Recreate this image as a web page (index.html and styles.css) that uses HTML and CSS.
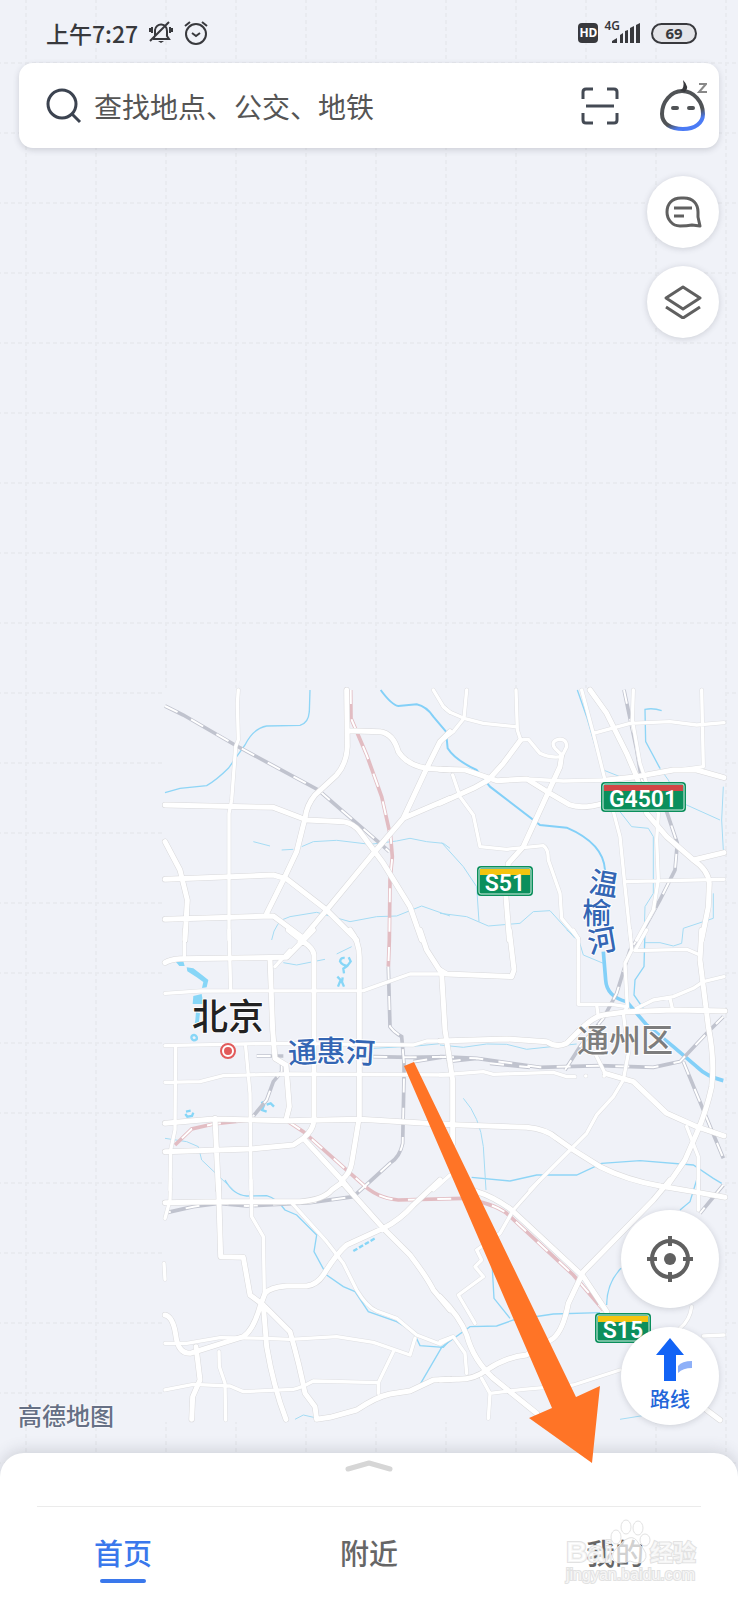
FILE: index.html
```
<!DOCTYPE html>
<html lang="zh-CN">

<head>
    <meta charset="utf-8">
    <meta name="viewport" content="width=device-width, initial-scale=1">
    <title>高德地图</title>
    <link rel="stylesheet" href="styles.css">
</head>

<body>
    <div class="screen">
        <svg class="map" viewBox="0 0 738 1600" preserveAspectRatio="xMidYMid slice" role="img" aria-label="地图">
            <defs>
                <pattern id="grid" x="25" y="62" width="70" height="70" patternUnits="userSpaceOnUse">
                    <path class="grid-line" d="M1 0V70M0 1H70" />
                </pattern>
                <!-- map data is drawn in 3x units, six tiles -->
                <g id="major">
                    <path transform="translate(450 2040)" d="M590 30L592 200Q590 250 560 285L495 345Q470 375 465 415L440 515L400 600L350 700M45 375L370 382L470 420L580 425Q610 430 630 455L700 550L780 680L815 780M45 598L370 585L410 597L530 690L620 780M45 718L370 708L460 775M45 485L90 570L112 660L105 780M595 152L690 155Q730 160 745 215Q770 255 830 265L900 270M450 785L530 690L670 520L760 415L830 265L870 185L900 155M760 415L900 355" />
                    <path transform="translate(1320 2040)" d="M242 180L190 250L145 300L100 325L0 370M0 268L75 270L170 302L260 297L330 340L390 375Q430 388 490 370M365 225L360 260L250 500L205 550L197 640L208 780M500 300L590 290L700 270L770 270L852 293M450 30L500 100L560 220L590 290L620 400L680 470L760 540L852 518M760 540Q805 570 808 610L805 680L785 780" />
                    <path transform="translate(450 2790)" d="M45 98Q60 88 90 86L410 82L490 0M415 0L460 35Q490 55 492 75V570Q490 600 460 625L430 645L300 657L45 665M600 0Q628 35 628 80V560L605 700Q600 730 575 750M360 85L368 300L375 385L408 405L418 530L408 570M45 580L190 567L410 572L630 568L830 580L900 583M195 565L205 780M810 0L830 60L875 130L885 300L908 450V640M460 625L575 750L600 780" />
                    <path transform="translate(1320 2790)" d="M208 0L222 120L215 140L20 132L0 120M0 333L200 327L320 335Q350 355 380 340L420 300Q460 260 490 255L560 245L700 240L855 243M0 583L260 592Q320 598 350 625L400 660L480 710Q560 750 660 768M785 0L780 90L805 290Q825 390 815 470Q800 540 770 610L735 690L680 770M495 430L580 455L680 550L770 590L852 618" />
                    <path transform="translate(450 3540)" d="M45 68L205 65L450 65Q520 60 545 30L580 5M205 0L212 230L280 232L300 345L340 375M45 405Q70 410 78 470Q85 520 120 520L280 470Q310 450 330 380L345 340Q360 322 410 318L470 318Q500 315 520 285Q560 220 590 195L700 145Q750 120 790 75L870 0M575 5L700 145L780 225Q830 290 850 330L900 390M340 375L350 500Q370 620 408 718M345 380L420 455Q450 560 465 640L495 680L500 718L540 712L620 690Q680 650 720 642L780 633L850 600L900 598M138 500L150 600L128 650L125 718" />
                    <path transform="translate(1320 3540)" d="M110 35Q160 50 215 90L430 290L500 395M690 0L640 60L430 275L385 370Q370 450 340 475L260 525Q200 530 140 570Q100 600 50 598L0 600M0 350Q60 410 80 465Q100 540 160 595L290 700M660 18L760 35L855 52M800 690L840 720" />
                </g>
                <g id="minor">
                    <path transform="translate(450 2040)" d="M850 30L880 80L900 97M265 30L262 70L265 180L257 200L245 360L237 400V780" />
                    <path transform="translate(1320 2040)" d="M80 30L72 115L40 155L0 185M10 80L30 97L72 115L130 130L225 140M228 30L232 150L242 180L265 178L300 220Q330 235 365 230L380 200Q380 175 355 178Q330 185 345 205L365 225M260 297L370 303L500 300M425 30L460 160L490 280L540 470L555 620L572 780M580 30L577 120L600 250L620 310L655 400L650 480L655 600L640 690L590 780M460 160L570 130L690 125L770 135L852 128M785 30L790 260L720 270M555 605L852 598M38 285L60 350L100 405L120 500L200 508L310 497Q325 505 325 540L360 640L365 715L415 775" />
                    <path transform="translate(450 2790)" d="M103 0V80M237 0L242 182M45 190L150 183L640 182L780 132H900M375 110L420 60M45 347L370 340L790 345L830 333H900M45 457L150 455L220 437L400 432L900 435M77 350L75 600L62 660L60 780M287 350L300 490L303 780M900 735L850 780" />
                    <path transform="translate(1320 2790)" d="M0 435L130 425L160 433L340 427L380 440H405M400 0L415 25V223H515L560 230M470 225L475 260M570 0L575 60L555 100L562 230L550 250L565 370L550 450M620 0L585 62L740 58L780 75M590 235L640 210L700 200L760 175L790 155L852 140M690 205L697 235M465 370L495 430M550 450L520 500L470 555L440 610L390 660L270 780M740 590L775 680V780M437 438H438M492 438H493" />
                    <path transform="translate(450 3540)" d="M303 0L305 110L340 170L343 340M62 0L60 60L45 115M42 250L45 298M45 490L110 490L210 473L350 475L420 478L560 470L670 487L780 525L795 475M730 515L685 608L490 603Q450 625 430 628L280 635L240 618L130 613L45 630M685 608V640M207 515L208 560L225 610L227 720M428 72L530 185L580 250L620 330Q650 380 680 393L740 415L800 465L870 492L900 475" />
                    <path transform="translate(1320 3540)" d="M300 0L220 90L180 160L110 210L125 240L105 260L130 290L55 345L105 430M0 485L40 470L75 520L80 580M125 595L150 640L145 715M150 640L250 628L400 615L540 570M775 0V90M755 380Q750 420 720 445M790 468L852 465" />
                </g>
                <g id="rail">
                    <path transform="translate(450 2040)" d="M45 78L100 105L255 195L505 330L690 490L718 515" />
                    <path transform="translate(1320 2040)" d="M552 30L590 210L605 300L680 395L712 490L705 570L660 660L610 750L570 810L530 940L490 1015L420 1100L375 1170" />
                    <path transform="translate(450 2790)" d="M715 110L720 290Q730 305 755 320L762 400V440L758 640Q750 680 720 700L610 800L480 818L290 828L205 820L130 830L50 848M395 405V425L370 455L350 510L310 558M320 378H400M670 380L780 382L900 380M790 395L900 378" />
                    <path transform="translate(1320 2790)" d="M0 380L110 385L300 412L480 407L640 412L720 395L800 310L850 260M20 395L110 385M150 400L270 412M730 395L790 540L850 685M850 765L780 850" />
                </g>
                <g id="metro">
                    <path transform="translate(450 2040)" d="M602 30L603 115L650 225L695 350L722 470L727 530L720 600L718 780L715 860" />
                    <path transform="translate(450 2790)" d="M300 570L190 582L125 597L75 645M415 575L460 605L635 760Q680 805 745 810L940 805" />
                    <path transform="translate(1320 3540)" d="M70 55Q160 70 200 100L400 285L490 390" />
                </g>
            </defs>

            <rect class="land" width="738" height="1600" />
            <rect fill="url(#grid)" width="738" height="1600" />
            <rect class="land" x="163" y="688" width="560" height="734" />

            <g transform="scale(.33333)">
                <g class="stream">
                    <path transform="translate(450 2040)" d="M480 30L478 95Q475 130 450 136L350 138Q310 145 285 195L235 265Q200 300 170 317L90 325L45 338" />
                    <path transform="translate(1320 2040)" d="M412 30L440 110L490 280M665 92Q640 83 615 88L617 185L660 265" />
                    <path transform="translate(1320 2790)" d="M615 0L612 110L585 150L582 195L620 250M95 742L210 753L290 735L410 735L485 700L600 692L760 705L820 745L845 760" />
                    <path transform="translate(450 3540)" d="M225 0Q250 45 290 48L350 47Q380 55 405 90L440 105L500 165L492 215L530 285L580 320L615 335L655 395L740 425L790 455L810 497L880 502L900 480M875 502L812 610" />
                    <path transform="translate(1320 3540)" d="M0 505L90 440L170 438L220 420L340 402L480 398M155 230L162 355L210 415M543 265Q500 310 500 375M770 0L750 65L720 90" />
                </g>
                <g class="stream thin">
                    <path transform="translate(450 2040)" d="M310 485L360 498M395 510L430 508M455 500L490 485L560 481L660 493L740 483L780 475L830 485L880 490L900 505M365 780Q375 720 420 710L500 697L600 725L680 710L740 708L815 678L900 708" />
                    <path transform="translate(1320 2040)" d="M0 700L80 710L145 738L240 730L280 695L330 692L405 775M5 488L70 560L110 620L117 725M490 270L540 290M540 395L575 440L625 445L640 470V640L615 680L612 780M660 265L685 300L710 350L740 375L840 420M850 320L845 420L850 510M820 640V715L730 745L725 790" />
                    <path transform="translate(450 2790)" d="M400 98L440 105L525 88M560 72L605 50M45 625L110 635L145 650L155 690L250 780M670 355L800 348L880 340" />
                    <path transform="translate(1320 2790)" d="M380 0L415 25L430 75L490 100M615 38L660 38L700 48L725 40M0 345L70 352L140 342L200 343L260 358L410 342M70 505Q120 560 130 650L138 780" />
                    <path transform="translate(450 3540)" d="M435 718L460 705L495 713M1410 718L1490 705" />
                </g>
                <g class="river">
                    <path transform="translate(1320 2040)" d="M-178 30Q-145 75 -125 78L-70 73Q-40 80 -20 110L18 155L23 205Q45 240 110 270L150 320L300 435L380 443Q490 490 495 570" />
                    <path class="wide" transform="translate(1320 2790)" d="M490 65L497 150Q500 200 560 215L620 285L700 350L770 410Q800 440 850 452" />
                </g>
                <g class="lake" transform="translate(450 2790)">
                    <path d="M78 96L100 94L104 108L88 108ZM110 112L130 115L160 138L175 150L170 172L156 174L160 156L140 142L112 124ZM130 198L155 192L160 222L128 222ZM138 245L150 250L145 290L132 294L136 270Z" />
                    <path class="shore" d="M125 326Q122 316 132 315Q143 318 140 328Q130 335 125 326M592 108Q576 106 570 94Q572 82 584 84M596 82L602 94L592 108L580 116L582 130M562 140L572 150L564 170M578 142L576 156L582 170M108 545L122 542M130 548L126 558L112 560L106 552M335 515L342 526L336 540L350 545M350 524L362 520L372 530" />
                </g>
                <path class="lake shore dots" d="M1060 3753L1125 3715" />

                <use href="#rail" class="rail" />
                <use href="#metro" class="metro" />
                <use href="#rail" class="ties" />
                <use href="#metro" class="ties" />
                <use href="#minor" class="road minor-case" />
                <use href="#major" class="road major-case" />
                <use href="#minor" class="road minor" />
                <use href="#major" class="road major" />
            </g>

            <g class="capital-dot">
                <circle cx="228" cy="1051" r="7" />
                <circle class="core" cx="228" cy="1051" r="3" />
            </g>
            <text class="city" x="228" y="1030">北京</text>
            <text class="district" x="625" y="1052">通州区</text>
            <g class="water-name">
                <text transform="translate(303 1063) rotate(-3)">通</text>
                <text transform="translate(331 1062)">惠</text>
                <text transform="translate(360 1063) rotate(3)">河</text>
                <text transform="translate(602 894) rotate(10)">温</text>
                <text transform="translate(597 924)">榆</text>
                <text transform="translate(604 951) rotate(-10)">河</text>
            </g>

            <g class="shield">
                <rect class="edge" x="601" y="782" width="85" height="30" rx="4" />
                <rect class="plate" x="603" y="784" width="81" height="26" rx="2" />
                <path class="national" d="M604 785H683V791H604Z" />
                <text x="643" y="807">G4501</text>
            </g>
            <g class="shield">
                <rect class="edge" x="477" y="866" width="56" height="30" rx="4" />
                <rect class="plate" x="479" y="868" width="52" height="26" rx="2" />
                <path class="province" d="M480 869H530V875H480Z" />
                <text x="505" y="891">S51</text>
            </g>
            <g class="shield">
                <rect class="edge" x="595" y="1313" width="56" height="30" rx="4" />
                <rect class="plate" x="597" y="1315" width="52" height="26" rx="2" />
                <path class="province" d="M598 1316H648V1322H598Z" />
                <text x="623" y="1338">S15</text>
            </g>
        </svg>

        <div class="status">
            <span class="time">上午7:27</span>
            <svg class="status-icon" viewBox="0 0 24 24">
                <path d="M4 18H20L18 15V10A6 6 0 0 0 6 9V15L4 18M1 20L20 1M1 7V11M3 6V12M23 7V11M21 6V12" />
                <path class="solid" d="M9 20H15L12 22Z" />
            </svg>
            <svg class="status-icon" viewBox="0 0 24 24">
                <circle cx="12" cy="13" r="10" />
                <path d="M1 5L6 1M23 5L18 1M8 12L12 15L16 12" />
            </svg>
            <span class="hd">HD</span>
            <span class="net">4G</span>
            <svg class="signal" viewBox="0 0 28 20">
                <path d="M0 20V18L5 15V20ZM8 20V12L11 10V20ZM13 20V8L16 7V20ZM18 20V5L22 3V20ZM24 20V2L28 0V20Z" />
            </svg>
            <span class="battery">69</span>
        </div>

        <form class="search">
            <svg class="search-icon" viewBox="0 0 36 36">
                <circle cx="16" cy="16" r="14" />
                <path d="M26 26L34 34" />
            </svg>
            <input type="search" aria-label="搜索" placeholder="查找地点、公交、地铁">
            <button type="button" class="plain" aria-label="扫一扫">
                <svg class="scan-icon" viewBox="0 0 38 38">
                    <path d="M2 12V5Q2 2 5 2H12M26 2H33Q36 2 36 5V12M36 26V33Q36 36 33 36H26M12 36H5Q2 36 2 33V26M5 19H33" />
                </svg>
            </button>
            <button type="button" class="plain" aria-label="语音助手">
                <svg class="robot-icon" viewBox="0 0 48 52">
                    <defs>
                        <linearGradient id="face" x1=".3" y1=".2" x2=".7" y2="1">
                            <stop offset=".62" stop-color="#505356" />
                            <stop offset=".85" stop-color="#4b7bf5" />
                        </linearGradient>
                    </defs>
                    <path stroke="url(#face)" d="M23 11C12 11 3 22 3 34C3 44 12 49 24 49C36 49 44 43 44 34C44 22 35 11 23 11Z" />
                    <path class="solid" d="M24 0Q31 7 26 12L21 11Q26 8 24 0Z" />
                    <path class="eyes" d="M14 28H18M30 28H34" />
                    <path class="zzz" d="M40 4H47L40 12H48" />
                </svg>
            </button>
        </form>

        <div class="tools">
            <button type="button" class="round" aria-label="消息">
                <svg viewBox="0 0 38 34">
                    <path d="M36 31L28 30Q23 31 16 31C8 31 3 24 3 17C3 9 8 3 17 3H20C29 3 34 9 34 17Q34 20 34 22Z" />
                    <path d="M10 13H28M10 21H20" />
                </svg>
            </button>
            <button type="button" class="round" aria-label="图层">
                <svg viewBox="0 0 38 34">
                    <path d="M19 2L36 13L19 24L2 13ZM2 22L19 33L36 22" />
                </svg>
            </button>
        </div>

        <div class="bottom">
            <span class="brand">高德地图</span>
            <div class="fabs">
                <button type="button" class="round big" aria-label="定位">
                    <svg viewBox="0 0 46 46">
                        <circle cx="23" cy="23" r="18" />
                        <circle class="solid" cx="23" cy="23" r="6" />
                        <path d="M23 0V10M23 36V46M0 23H10M36 23H46" />
                    </svg>
                </button>
                <button type="button" class="round big route">
                    <svg viewBox="0 0 46 46">
                        <path class="turn" d="M31 36V29Q35 24 45 24V31Q36 31 31 36Z" />
                        <path class="go" d="M23 1L37 18H29V44H17V18H9Z" />
                    </svg>
                    <span>路线</span>
                </button>
            </div>
        </div>

        <div class="sheet">
            <button type="button" class="handle" aria-label="展开">
                <svg viewBox="0 0 48 12">
                    <path d="M3 9L24 3L45 9" />
                </svg>
            </button>
            <nav class="tabs">
                <a href="#home" class="active">首页</a>
                <a href="#nearby">附近</a>
                <a href="#mine">我的</a>
            </nav>
        </div>

        <svg class="overlay" viewBox="0 0 738 1600" preserveAspectRatio="xMidYMid slice">
            <path class="arrow" d="M404 1066L414 1062L576 1397L600 1386L592 1463L529 1418L552 1408Z" />
            <g class="watermark">
                <text class="mark" x="566" y="1562">Bai</text>
                <ellipse cx="616" cy="1537" rx="5" ry="7" />
                <ellipse cx="626" cy="1527" rx="5" ry="7" />
                <ellipse cx="638" cy="1528" rx="5" ry="7" />
                <ellipse cx="645" cy="1540" rx="5" ry="6" />
                <path d="M629 1538Q635 1536 639 1544Q650 1554 644 1561Q639 1565 630 1561Q619 1565 614 1561Q609 1553 620 1545Q624 1539 629 1538Z" />
                <text class="mark-cn" x="650" y="1561">经验</text>
                <text class="url" x="566" y="1580">jingyan.baidu.com</text>
            </g>
        </svg>
    </div>
</body>

</html>
```

FILE: styles.css
```
* {
    box-sizing: border-box;
}

body {
    margin: 0;
    font-family: "Noto Sans CJK SC", "Noto Sans", sans-serif;
    color: #333;
}

button,
input {
    font: inherit;
    border: 0;
    padding: 0;
    background: none;
}

button {
    cursor: pointer;
}

svg {
    display: block;
    flex: none;
    fill: none;
}

.screen {
    position: relative;
    display: flex;
    flex-direction: column;
    min-height: 100vh;
    overflow: hidden;
    background: #f0f2f8;
}

/* map */
.map,
.overlay {
    position: absolute;
    top: 0;
    left: 0;
    width: 100%;
    height: 100%;
}

.overlay {
    z-index: 2;
    pointer-events: none;
}

.land {
    fill: #f0f2f8;
}

.grid-line {
    stroke: #e9ebf0;
    stroke-width: 2;
    stroke-dasharray: 4 3;
}

.road {
    stroke-linecap: round;
    stroke-linejoin: round;
}

.major-case {
    stroke: #d8d8da;
    stroke-width: 18;
}

.major {
    stroke: #fff;
    stroke-width: 15;
}

.minor-case {
    stroke: #dedfe2;
    stroke-width: 13;
}

.minor {
    stroke: #fff;
    stroke-width: 10;
}

.rail {
    stroke: #c0c3ce;
    stroke-width: 11;
}

.metro {
    stroke: #e2bcc2;
    stroke-width: 11;
}

.ties {
    stroke: #fff;
    stroke-width: 6;
    stroke-dasharray: 42 46;
}

.stream {
    stroke: #8ed5f6;
    stroke-width: 4;
}

.thin {
    stroke: #a5dcf4;
    stroke-width: 3;
}

.river {
    stroke: #83d0f8;
    stroke-width: 6;
}

.wide {
    stroke-width: 11;
}

.lake {
    fill: #87d6f7;
}

.shore {
    fill: none;
    stroke: #87d6f7;
    stroke-width: 7;
}

.dots {
    stroke-dasharray: 14 6;
}

.capital-dot {
    fill: #fff;
    stroke: #e25b5b;
    stroke-width: 2;
}

.core {
    fill: #e25b5b;
}

.map text {
    text-anchor: middle;
    paint-order: stroke;
    stroke: #fff;
    stroke-width: 2;
    stroke-linejoin: round;
}

.map .city {
    font-size: 36px;
    font-weight: 500;
    fill: #222;
}

.map .district {
    font-size: 32px;
    font-weight: 500;
    fill: #7d7d7d;
}

.water-name {
    font-size: 29px;
    font-weight: 500;
    fill: #3466b4;
}

.edge {
    fill: #0b8f5c;
}

.plate {
    fill: #0b8f5c;
    stroke: #d5eee3;
    stroke-width: 1;
}

.national {
    fill: #d04545;
}

.province {
    fill: #f5c40f;
}

.map .shield text {
    font-family: Roboto, sans-serif;
    font-size: 23px;
    font-weight: 600;
    fill: #fff;
    stroke: none;
}

/* status bar */
.status {
    position: relative;
    display: flex;
    align-items: center;
    height: 63px;
    padding: 3px 41px 0 46px;
    color: #38393d;
}

.time {
    margin-right: 11px;
    font-size: 23px;
    font-weight: 500;
}

.status-icon {
    width: 24px;
    height: 24px;
    margin-right: 11px;
    stroke: #38393d;
    stroke-width: 2;
}

.solid {
    fill: #38393d;
    stroke: none;
}

.hd {
    width: 20px;
    height: 20px;
    margin-left: auto;
    border-radius: 4px;
    background: #38393d;
    color: #fff;
    font: 700 12px/20px "Noto Sans", sans-serif;
    text-align: center;
}

.net {
    align-self: flex-start;
    margin: 16px 0 0 6px;
    font: 600 12px/14px "Noto Sans", sans-serif;
}

.signal {
    width: 28px;
    height: 20px;
    margin: 0 11px 0 -8px;
    fill: #38393d;
}

.battery {
    width: 46px;
    height: 21px;
    border: 2px solid #38393d;
    border-radius: 11px;
    background: #e4e5e9;
    font: 700 15px/17px "Noto Sans", sans-serif;
    text-align: center;
}

/* search */
.search {
    position: relative;
    display: flex;
    align-items: center;
    height: 85px;
    margin: 0 19px;
    padding: 0 12px 0 27px;
    border-radius: 14px;
    background: #fff;
    box-shadow: 0 2px 6px rgba(60, 65, 80, .2);
}

.search-icon {
    width: 36px;
    height: 36px;
    stroke: #3c4350;
    stroke-width: 3;
}

.search input {
    flex: 1;
    min-width: 0;
    margin: 0 12px;
    font-size: 28px;
    outline: none;
}

.search input::placeholder {
    color: #555;
    opacity: 1;
}

.scan-icon {
    width: 38px;
    height: 38px;
    margin-right: 40px;
    stroke: #444a54;
    stroke-width: 3;
}

.robot-icon {
    width: 48px;
    height: 52px;
    stroke-width: 4;
}

.eyes {
    stroke: #505356;
    stroke-linecap: round;
}

.zzz {
    stroke: #888;
    stroke-width: 2;
}

/* round buttons */
.tools {
    position: relative;
    display: flex;
    flex-direction: column;
    align-items: flex-end;
    gap: 18px;
    padding: 28px 19px;
}

.round {
    display: flex;
    flex-direction: column;
    align-items: center;
    justify-content: center;
    width: 72px;
    height: 72px;
    border-radius: 50%;
    background: #fff;
    box-shadow: 0 1px 6px rgba(60, 65, 80, .2);
}

.round svg {
    width: 38px;
    height: 34px;
    stroke: #606060;
    stroke-width: 3;
    stroke-linejoin: round;
}

.big {
    width: 98px;
    height: 98px;
}

.big svg {
    width: 46px;
    height: 46px;
    stroke-width: 4;
}

.big .solid {
    fill: #606060;
}

.route {
    color: #2366d9;
    font-size: 20px;
    font-weight: 500;
    line-height: 32px;
}

.route svg {
    stroke: none;
}

.go {
    fill: #1263f5;
}

.turn {
    fill: #8eb0f8;
}

.bottom {
    position: relative;
    display: flex;
    align-items: flex-end;
    justify-content: space-between;
    margin-top: auto;
    padding: 0 19px 28px 18px;
}

.brand {
    font-size: 24px;
    font-weight: 500;
    line-height: 20px;
    color: #667085;
    text-shadow: 0 0 2px #fff, 0 0 2px #fff;
}

.fabs {
    display: flex;
    flex-direction: column;
    gap: 19px;
}

/* bottom sheet */
.sheet {
    position: relative;
    height: 147px;
    border-radius: 24px 24px 0 0;
    background: #fff;
    box-shadow: 0 -2px 16px rgba(60, 65, 80, .2);
}

.handle {
    display: block;
    height: 53px;
    margin: 0 auto;
}

.handle svg {
    width: 48px;
    height: 12px;
    margin-bottom: 28px;
    stroke: #d6d6d6;
    stroke-width: 5;
    stroke-linecap: round;
    stroke-linejoin: round;
}

.tabs {
    display: grid;
    grid-template-columns: repeat(3, 1fr);
    height: 94px;
    background: linear-gradient(#ebebeb, #ebebeb) center top / calc(100% - 74px) 1px no-repeat;
}

.tabs a {
    display: flex;
    flex-direction: column;
    align-items: center;
    padding-top: 24px;
    font-size: 29px;
    font-weight: 500;
    line-height: 44px;
    color: #666;
    text-decoration: none;
}

.tabs .active {
    color: #3a78ec;
}

.tabs .active::after {
    content: "";
    width: 46px;
    height: 4px;
    margin-top: 5px;
    border-radius: 2px;
    background: #3a78ec;
}

.arrow {
    fill: #ff7426;
}

.watermark {
    fill: #fff;
    fill-opacity: .7;
    stroke: #e2e2e2;
    stroke-width: 1;
}

.watermark text {
    paint-order: stroke;
    stroke-width: 2;
}

.mark {
    font: 700 30px "Liberation Sans", sans-serif;
}

.mark-cn {
    font-size: 23px;
    font-weight: 700;
}

.url {
    font: 16px "Liberation Sans", sans-serif;
}
```
